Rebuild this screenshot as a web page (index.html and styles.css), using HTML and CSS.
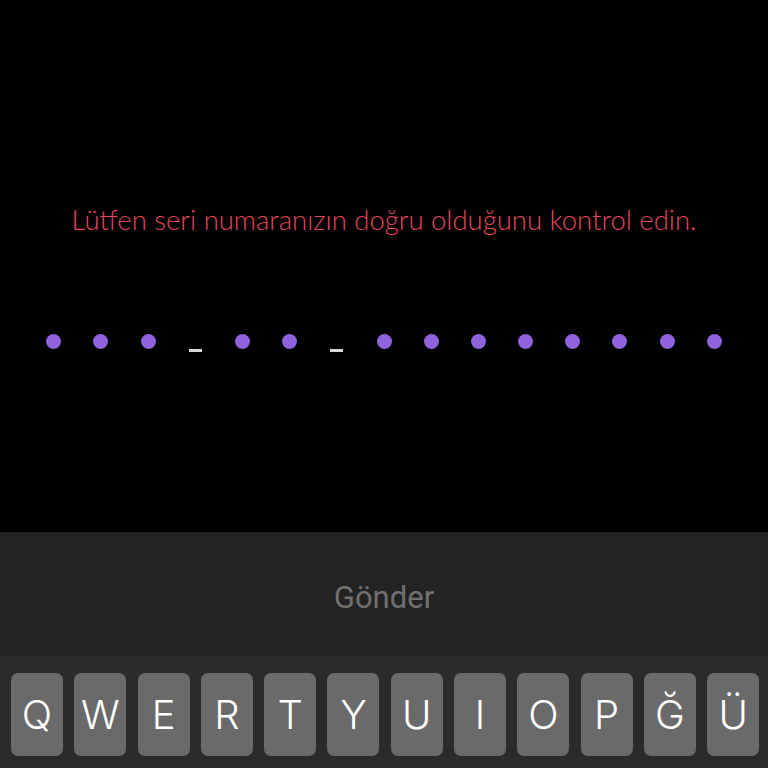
FILE: index.html
```html
<!DOCTYPE html>
<html lang="tr">
<head>
<meta charset="utf-8">
<link rel="stylesheet" href="styles.css">
</head>
<body>
<div class="screen">
  <div class="top">
    <p class="error">Lütfen seri numaranızın doğru olduğunu kontrol edin.</p>
    <div class="code">
      <span class="slot"><i class="dot"></i></span>
      <span class="slot"><i class="dot"></i></span>
      <span class="slot"><i class="dot"></i></span>
      <span class="slot"><i class="dash"></i></span>
      <span class="slot"><i class="dot"></i></span>
      <span class="slot"><i class="dot"></i></span>
      <span class="slot"><i class="dash"></i></span>
      <span class="slot"><i class="dot"></i></span>
      <span class="slot"><i class="dot"></i></span>
      <span class="slot"><i class="dot"></i></span>
      <span class="slot"><i class="dot"></i></span>
      <span class="slot"><i class="dot"></i></span>
      <span class="slot"><i class="dot"></i></span>
      <span class="slot"><i class="dot"></i></span>
      <span class="slot"><i class="dot"></i></span>
    </div>
  </div>
  <div class="panel"><span class="send">Gönder</span></div>
  <div class="keyboard">
    <div class="row">
      <span class="key">Q</span><span class="key">W</span><span class="key">E</span><span class="key">R</span><span class="key">T</span><span class="key">Y</span><span class="key">U</span><span class="key">I</span><span class="key">O</span><span class="key">P</span><span class="key">Ğ</span><span class="key">Ü</span>
    </div>
  </div>
</div>
</body>
</html>
```
FILE: styles.css
```css
html, body {
  margin: 0;
  padding: 0;
  background: #000;
}
.screen {
  width: 768px;
  height: 768px;
  display: flex;
  flex-direction: column;
  overflow: hidden;
}
.top {
  height: 532px;
  background: #000;
  padding-top: 205px;
  box-sizing: border-box;
}
.error {
  margin: 0;
  text-align: center;
  font-family: "Lato", "DejaVu Sans", sans-serif;
  font-weight: 300;
  font-size: 27.5px;
  line-height: 30px;
  color: #e2455d;
}
.code {
  margin-top: 91px;
  height: 30px;
  display: flex;
  justify-content: center;
  align-items: center;
}
.slot {
  width: 47.2px;
  height: 30px;
  display: flex;
  justify-content: center;
  align-items: center;
}
.dot {
  width: 15px;
  height: 15px;
  border-radius: 50%;
  background: #8f63dd;
}
.dash {
  width: 13px;
  height: 3px;
  background: #d8d8d8;
  margin-top: 18px;
}
.panel {
  height: 124px;
  background: #232323;
  display: flex;
  justify-content: center;
  align-items: center;
}
.send {
  font-family: "Roboto", "Liberation Sans", sans-serif;
  font-size: 31px;
  color: #707070;
  margin-top: 6px;
}
.keyboard {
  flex: 1;
  background: #2b2b2b;
  padding-top: 17px;
}
.row {
  display: flex;
  gap: 11.3px;
  padding-left: 11px;
}
.key {
  width: 52px;
  height: 83px;
  border-radius: 7px;
  background: #6a6a6a;
  color: #fff;
  font-family: "Inter", "Roboto", sans-serif;
  font-weight: 300;
  font-size: 40px;
  display: flex;
  justify-content: center;
  align-items: center;
}
```
